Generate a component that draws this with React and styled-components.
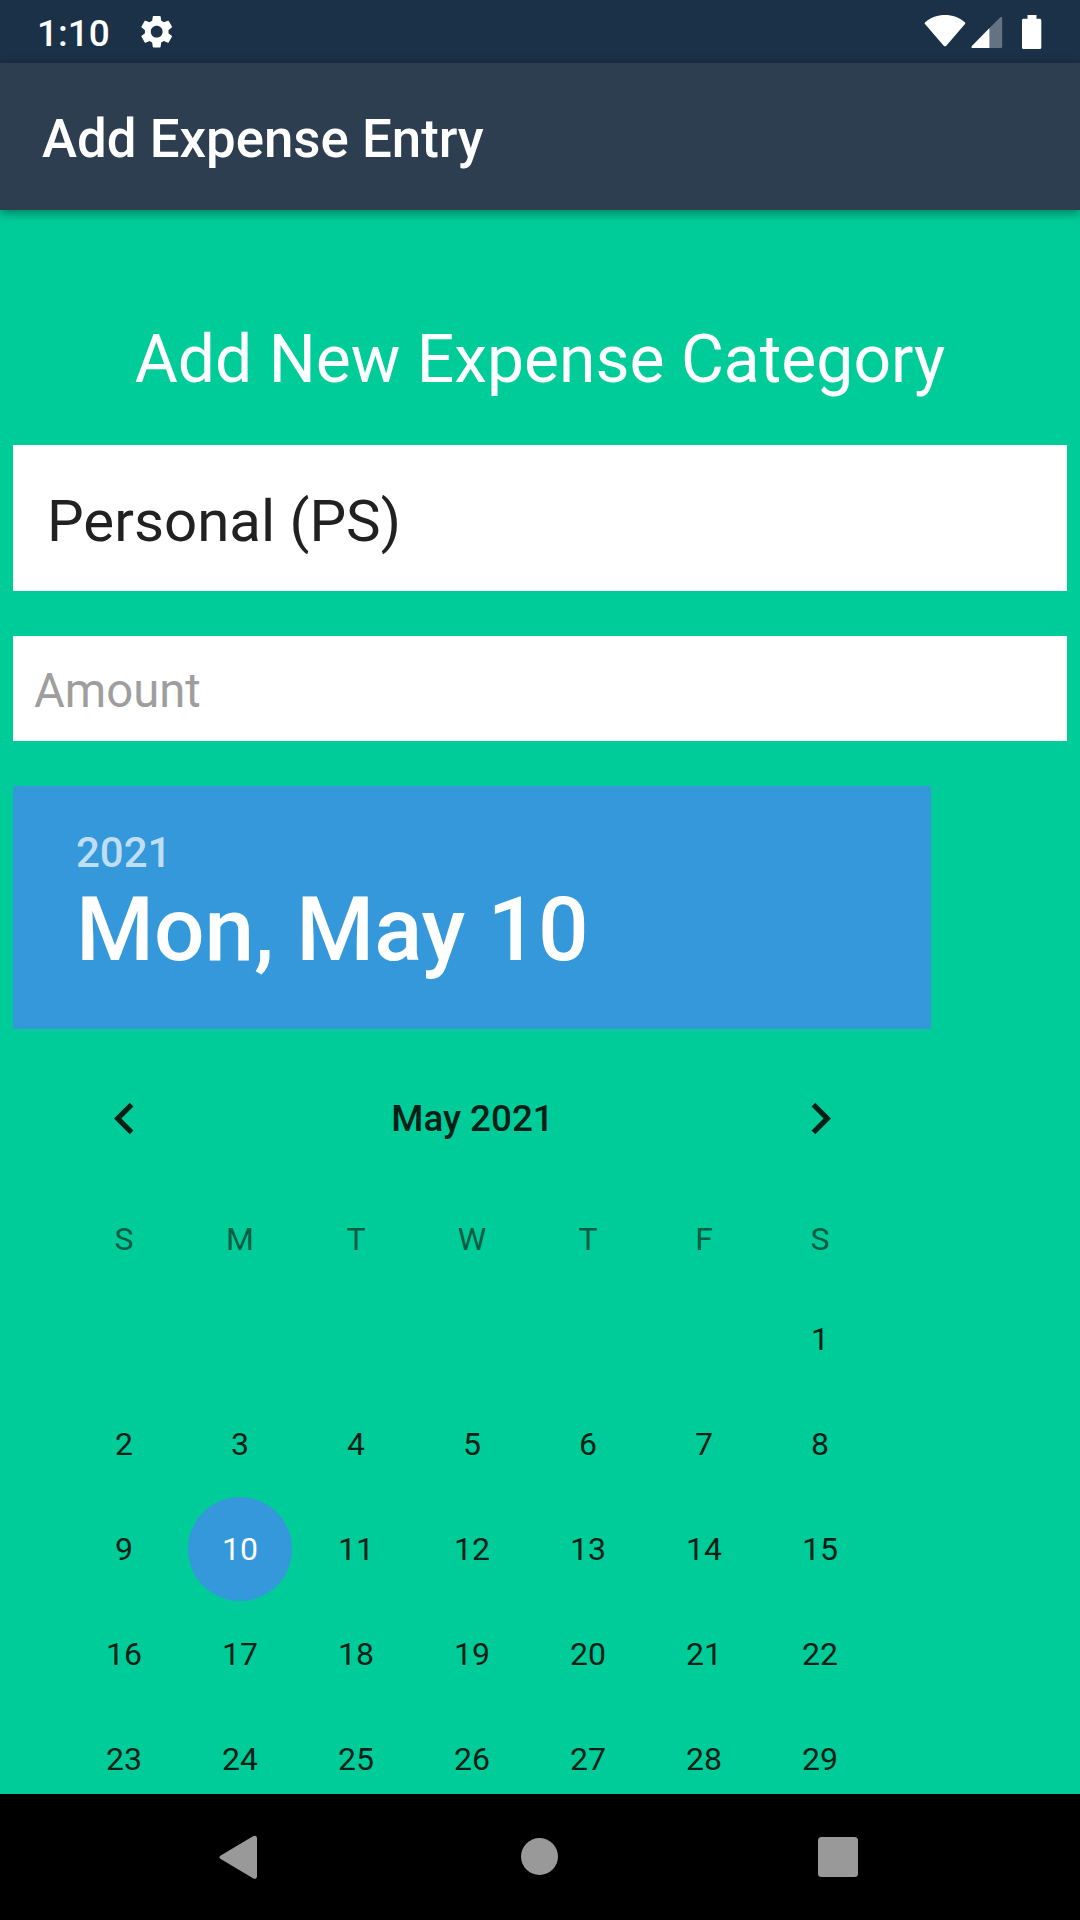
import React from "react";
import styled, { createGlobalStyle, css } from "styled-components";
import { MdSettings, MdChevronLeft, MdChevronRight } from "react-icons/md";

const GlobalStyle = createGlobalStyle`
  *, *::before, *::after { box-sizing: border-box; }
  body { margin: 0; font-family: Roboto, "Noto Sans", sans-serif; }
`;

const Screen = styled.div`
  display: flex;
  flex-direction: column;
  width: 1080px;
  height: 1920px;
  overflow: hidden;
  background: #00cc99;
`;

const StatusBar = styled.header`
  display: flex;
  align-items: center;
  flex: 0 0 63px;
  padding: 0 38px 0 37px;
  background: #1b3147;
  color: #fff;
`;

const Clock = styled.time`
  width: 100px;
  padding-top: 4px;
  font-size: 37px;
  line-height: 44px;
  font-weight: 500;
`;

const StatusIcons = styled.div`
  display: flex;
  align-items: center;
  gap: 5px;
  margin-left: auto;

  svg:last-child { margin-left: 14px; }
`;

const AppBar = styled.div`
  display: flex;
  align-items: center;
  flex: 0 0 147px;
  padding: 5px 42px 0;
  background: #2d3e50;
  box-shadow: 0 3px 10px rgba(0, 0, 0, 0.4);
  z-index: 1;
`;

const AppTitle = styled.h1`
  margin: 0;
  color: #fff;
  font-size: 52.8px;
  font-weight: 500;
  line-height: 62px;
`;

const Content = styled.main`
  flex: 1;
  min-height: 0;
  overflow: hidden;
  padding: 111px 13px 0;
`;

const Heading = styled.h2`
  margin: 0 0 47px;
  color: #fff;
  font-size: 66px;
  font-weight: 400;
  line-height: 77px;
  text-align: center;
`;

const Field = styled.div`
  display: flex;
  align-items: center;
  margin-bottom: 45px;
  background: #fff;
  ${({ $kind }) =>
    $kind === "select"
      ? css`
          height: 146px;
          padding: 6px 34px 0;
          color: #212121;
          font-size: 58.2px;
        `
      : css`
          height: 105px;
          padding: 4px 21px 0;
          color: #9e9e9e;
          font-size: 47.25px;
        `}
`;

const DatePicker = styled.section`
  width: 918px;
`;

const DateHeader = styled.div`
  height: 243px;
  padding: 42px 63px 0;
  background: #3498db;
  color: #fff;
  font-weight: 500;
`;

const Year = styled.div`
  color: rgba(255, 255, 255, 0.7);
  font-size: 42px;
  line-height: 50px;
`;

const SelectedDate = styled.div`
  font-size: 89.15px;
  line-height: 104px;
`;

const MonthBar = styled.div`
  display: flex;
  align-items: center;
  justify-content: space-between;
  height: 163px;
  padding: 15px 79px 0 80px;
  color: #001f17;
  font-size: 36.75px;
  font-weight: 500;
`;

const WeekGrid = styled.div`
  display: grid;
  grid-template-columns: repeat(7, 116px);
  grid-auto-rows: ${({ $row }) => $row}px;
  padding-left: 53px;
  place-items: center;
  font-size: 32px;
`;

const Weekday = styled.span`
  padding-bottom: 2px;
  color: #005c45;
`;

const Day = styled.span`
  display: grid;
  place-items: center;
  align-self: start;
  width: 104px;
  height: 104px;
  border-radius: 50%;
  color: ${({ $selected }) => ($selected ? "#fff" : "#001f17")};
  background: ${({ $selected }) => ($selected ? "#3498db" : "transparent")};
  ${({ $start }) => $start && `grid-column-start: ${$start};`}
`;

const NavBar = styled.nav`
  display: grid;
  grid-template-columns: repeat(3, 300px);
  justify-content: center;
  place-items: center;
  align-content: center;
  flex: 0 0 126px;
  padding-right: 2px;
  background: #000;
`;

const WEEKDAYS = ["S", "M", "T", "W", "T", "F", "S"];
const DAYS = Array.from({ length: 29 }, (_, i) => i + 1);

const WifiIcon = () => (
  <svg width="42" height="34" viewBox="0 0 42 34" fill="#fff">
    <path d="M1.2 7.200C7 2.500 13.500 0 21 0s14 2.500 19.800 7.200c.6.5.7 1.300.2 1.900L22.300 30.700c-.7.8-1.900.8-2.600 0L1 9.100c-.5-.6-.4-1.400.2-1.900z" />
  </svg>
);

const SignalIcon = () => (
  <svg width="32" height="34" viewBox="0 0 32 34">
    <path d="M18.500 13.100 29.300 2.300c.8-.8 1.900-.3 1.900.8v28.400c0 .9-.5 1.500-1.400 1.500H18.500z" fill="#fff" fillOpacity=".32" />
    <path d="M18.500 13.100V33H1.700c-1.300 0-1.700-1.200-.8-2.100z" fill="#fff" />
  </svg>
);

const BatteryIcon = () => (
  <svg width="20" height="34" viewBox="0 0 20 34" fill="#fff">
    <path d="M5.500 0h9v3.700h3.300c.9 0 1.500.6 1.500 1.500v27.300c0 .9-.6 1.500-1.500 1.500H1.500C.6 34 0 33.400 0 32.500V5.200c0-.9.6-1.500 1.500-1.500h4z" />
  </svg>
);

const BackIcon = () => (
  <svg width="44" height="44" viewBox="0 0 44 44" fill="#999">
    <path d="M3.700 20.600 36 1.300c2.300-1.300 4-.2 4 2v38c0 2.200-1.700 3.300-4 2L3.700 24c-1.700-1-1.700-2.400 0-3.400z" />
  </svg>
);

const HomeIcon = () => (
  <svg width="44" height="44" viewBox="0 0 44 44" fill="#999">
    <circle cx="22.500" cy="21.500" r="18.500" />
  </svg>
);

const RecentsIcon = () => (
  <svg width="44" height="44" viewBox="0 0 44 44" fill="#999">
    <rect x="1" y="2" width="40" height="40" rx="3.500" />
  </svg>
);

export default function App() {
  return (
    <>
      <GlobalStyle />
      <Screen>
        <StatusBar>
          <Clock>1:10</Clock>
          <MdSettings size={39.4} />
          <StatusIcons>
            <WifiIcon />
            <SignalIcon />
            <BatteryIcon />
          </StatusIcons>
        </StatusBar>
        <AppBar>
          <AppTitle>Add Expense Entry</AppTitle>
        </AppBar>
        <Content>
          <Heading>Add New Expense Category</Heading>
          <Field $kind="select">Personal (PS)</Field>
          <Field $kind="input">Amount</Field>
          <DatePicker>
            <DateHeader>
              <Year>2021</Year>
              <SelectedDate>Mon, May 10</SelectedDate>
            </DateHeader>
            <MonthBar>
              <MdChevronLeft size={63} />
              <span>May 2021</span>
              <MdChevronRight size={63} />
            </MonthBar>
            <WeekGrid $row={95}>
              {WEEKDAYS.map((d, i) => (
                <Weekday key={i}>{d}</Weekday>
              ))}
            </WeekGrid>
            <WeekGrid $row={105}>
              {DAYS.map((d) => (
                <Day key={d} $selected={d === 10} $start={d === 1 ? 7 : undefined}>
                  {d}
                </Day>
              ))}
            </WeekGrid>
          </DatePicker>
        </Content>
        <NavBar>
          <BackIcon />
          <HomeIcon />
          <RecentsIcon />
        </NavBar>
      </Screen>
    </>
  );
}
